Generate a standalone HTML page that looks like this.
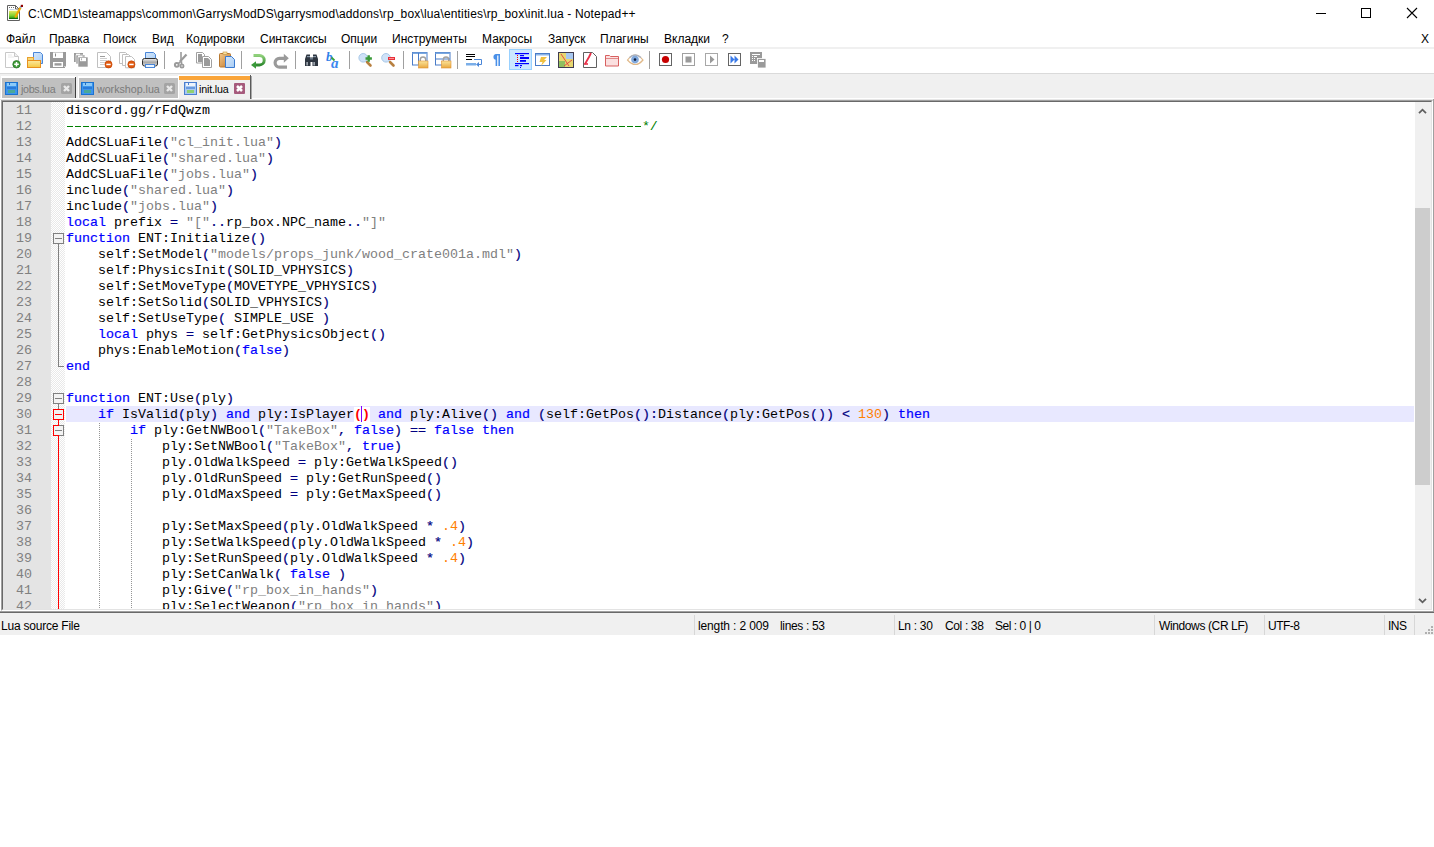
<!DOCTYPE html>
<html><head><meta charset="utf-8">
<style>
*{margin:0;padding:0;box-sizing:border-box}
html,body{width:1434px;height:847px;overflow:hidden;background:#fff}
body{position:relative;font-family:"Liberation Sans",sans-serif;font-size:12px;color:#000}
.a{position:absolute}
.t{position:absolute;white-space:pre;line-height:14px}
/* title */
#title{left:28px;top:7px;letter-spacing:0.16px}
/* menu */
.mi{position:absolute;top:32px;white-space:pre;line-height:14px}
/* toolbar */
.sep{position:absolute;top:52px;width:1px;height:17px;background:#a0a0a0}
.ico{position:absolute;top:52px;width:16px;height:16px}
/* tabs */
#tabbar{left:0;top:74px;width:1434px;height:26px;background:#f0f0f0}
.tab{position:absolute;top:78px;height:20px;background:#c0c0c0}
.tabtxt{position:absolute;top:82px;white-space:pre;line-height:14px;font-size:10.7px;color:#7a7a7a}
/* editor */
#ed{left:1px;top:100px;width:1432px;height:511px;border-top:1px solid #a0a0a0;border-left:1px solid #a0a0a0;border-right:1px solid #fff;border-bottom:1px solid #fff}
#edi{left:2px;top:101px;width:1430px;height:509px;border-top:1px solid #696969;border-left:1px solid #696969;border-right:1px solid #e3e3e3;border-bottom:1px solid #e3e3e3}
#clip{left:3px;top:102px;width:1428px;height:507px;overflow:hidden}
#clip .inner{position:absolute;left:-3px;top:-102px;width:1434px;height:847px}
#lnm{left:3px;top:102px;width:48px;height:508px;background:#e4e4e4}
#fold{left:51px;top:102px;width:14px;height:508px;background-color:#fff;background-image:linear-gradient(45deg,#e9e9e9 25%,transparent 25%,transparent 75%,#e9e9e9 75%),linear-gradient(45deg,#e9e9e9 25%,transparent 25%,transparent 75%,#e9e9e9 75%);background-size:2px 2px;background-position:1px 0,0 1px}
.ln{position:absolute;left:66px;height:16px;line-height:16px;padding-top:1px;white-space:pre;font-family:"Liberation Mono",monospace;font-size:13.333px;letter-spacing:0px;color:#000}
.ln.cur{background:#e8e8ff;width:1348px}
.num{position:absolute;left:3px;width:29px;text-align:right;height:16px;line-height:16px;padding-top:1px;font-family:"Liberation Mono",monospace;font-size:13.333px;letter-spacing:0px;color:#808080}
i{font-style:normal}
i.k{color:#0000ff;font-weight:normal;-webkit-text-stroke:0.2px #0000ff}
i.s{color:#808080}
i.o{color:#000080;font-weight:normal;-webkit-text-stroke:0.2px #000080}
i.n{color:#ff8000}
i.c{color:#008000}
i.bh{color:#ff0000;font-weight:bold;background:#fff}
/* scrollbar */
#sb{left:1415px;top:102px;width:16px;height:508px;background:#f0f0f0}
#thumb{left:1415px;top:208px;width:15px;height:277px;background:#cdcdcd}
/* status */
#st{left:0;top:611px;width:1434px;height:24px;background:#f0f0f0;border-top:1px solid #a0a0a0;box-shadow:inset 0 1px 0 #696969}
.sdiv{position:absolute;top:615px;width:1px;height:20px;background:#d7d7d7}
.stx{position:absolute;top:619px;white-space:pre;line-height:14px}
</style></head><body>

<!-- title bar -->
<svg class="a" style="left:6px;top:4px" width="18" height="18" viewBox="6 4 18 18">
 <defs><linearGradient id="gic" x1="0" y1="0" x2="0" y2="1"><stop offset="0" stop-color="#e8e860"/><stop offset="0.6" stop-color="#7cd030"/><stop offset="1" stop-color="#1a8a10"/></linearGradient></defs>
 <path d="M7.5 5.5h8l4 4v11h-12z" fill="#fff" stroke="#606060"/>
 <path d="M15.5 5.5v3.5h4" fill="none" stroke="#606060"/>
 <rect x="9" y="7" width="1" height="1" fill="#707070"/><rect x="11" y="7" width="1" height="1" fill="#707070"/><rect x="13" y="7" width="1" height="1" fill="#707070"/>
 <rect x="9.5" y="9" width="5" height="0.8" fill="#b8cce0"/>
 <rect x="9" y="10.8" width="9" height="8" fill="url(#gic)"/>
 <rect x="9" y="18" width="9" height="0.9" fill="#0a6a0a"/>
 <path d="M15.2 17.5l5.3-10" stroke="#f0a800" stroke-width="2.2"/>
 <path d="M20.3 7.8l0.9-1.7" stroke="#90a8c8" stroke-width="2"/>
 <rect x="20.8" y="4.8" width="2.2" height="2.2" fill="#900000"/>
</svg>
<div class="t" id="title">C:\CMD1\steamapps\common\GarrysModDS\garrysmod\addons\rp_box\lua\entities\rp_box\init.lua - Notepad++</div>
<div class="a" style="left:1316px;top:13px;width:10px;height:1px;background:#000"></div>
<div class="a" style="left:1361px;top:8px;width:10px;height:10px;border:1px solid #000"></div>
<svg class="a" style="left:1406px;top:7px" width="12" height="12" viewBox="0 0 12 12"><path d="M1 1L11 11M11 1L1 11" stroke="#000" stroke-width="1.1"/></svg>

<!-- menu -->
<div class="mi" style="left:6px">Файл</div>
<div class="mi" style="left:49px">Правка</div>
<div class="mi" style="left:103px">Поиск</div>
<div class="mi" style="left:152px">Вид</div>
<div class="mi" style="left:186px">Кодировки</div>
<div class="mi" style="left:260px">Синтаксисы</div>
<div class="mi" style="left:341px">Опции</div>
<div class="mi" style="left:392px">Инструменты</div>
<div class="mi" style="left:482px">Макросы</div>
<div class="mi" style="left:548px">Запуск</div>
<div class="mi" style="left:600px">Плагины</div>
<div class="mi" style="left:664px">Вкладки</div>
<div class="mi" style="left:722px">?</div>
<div class="mi" style="left:1421px;color:#000">X</div>
<div class="a" style="left:0;top:47px;width:1434px;height:2px;background:#f0f0f0"></div>

<!-- toolbar -->
<svg class="a" style="left:0;top:46px" width="780" height="28" viewBox="0 46 780 28">
<defs>
 <linearGradient id="gfold" x1="0" y1="0" x2="0" y2="1"><stop offset="0" stop-color="#fbe9a0"/><stop offset="1" stop-color="#f5c842"/></linearGradient>
 <linearGradient id="gblue" x1="0" y1="0" x2="1" y2="1"><stop offset="0" stop-color="#d6e8fc"/><stop offset="1" stop-color="#a8cdf5"/></linearGradient>
 <linearGradient id="gprint" x1="0" y1="0" x2="0" y2="1"><stop offset="0" stop-color="#f0f0f0"/><stop offset="0.5" stop-color="#a8a8a8"/><stop offset="1" stop-color="#e0e0e0"/></linearGradient>
 <linearGradient id="gclip" x1="0" y1="0" x2="1" y2="1"><stop offset="0" stop-color="#f4c88a"/><stop offset="1" stop-color="#c07a30"/></linearGradient>
 <linearGradient id="glock" x1="0" y1="0" x2="0" y2="1"><stop offset="0" stop-color="#fbe49a"/><stop offset="1" stop-color="#e8a840"/></linearGradient>
 <linearGradient id="ggreen" x1="0" y1="0" x2="0" y2="1"><stop offset="0" stop-color="#8fd07a"/><stop offset="1" stop-color="#2f8a2f"/></linearGradient>
</defs>
<!-- 1 New -->
<path d="M5.5 52.5h9l4 4v11h-13z" fill="#fff" stroke="#c8c8c8"/>
<path d="M14.5 52.5v4h4" fill="#f0f0f0" stroke="#c8c8c8"/>
<path d="M8 55h4M8 57h6" stroke="#e8e8e8"/>
<circle cx="16.5" cy="64.3" r="3.7" fill="#3d9a35" stroke="#2a7a2a" stroke-width="0.8"/>
<path d="M16.5 62v4.6M14.2 64.3h4.6" stroke="#fff" stroke-width="1.5"/>
<!-- 2 Open -->
<path d="M33.5 52.5h7l2 2v9h-9z" fill="url(#gblue)" stroke="#4a86d8"/>
<path d="M27.5 57.5h5l1 1h0v0" fill="none" stroke="#e8901e"/>
<rect x="27.5" y="57.5" width="6" height="3" fill="#f8d878" stroke="#e8a030"/>
<rect x="27.5" y="60.5" width="13" height="7" fill="url(#gfold)" stroke="#e8901e"/>
<!-- 3 Save -->
<path d="M50 52h16v15h-1v1h-15z" fill="#9a9a9a"/>
<rect x="53" y="52.5" width="10" height="5.5" fill="#fff"/>
<rect x="55" y="53.5" width="1" height="3" fill="#8a8a8a"/>
<rect x="53" y="62" width="10" height="5" fill="#fff"/>
<rect x="54.5" y="63.2" width="7" height="2.4" fill="#9a9a9a"/>
<rect x="64.5" y="66" width="1" height="1" fill="#fff"/>
<!-- 4 Save all -->
<rect x="74" y="53" width="9" height="9" fill="#9a9a9a"/>
<rect x="76" y="55" width="9" height="9" fill="#9a9a9a" stroke="#fff" stroke-width="0.6"/>
<rect x="78" y="57" width="10" height="10" fill="#9a9a9a" stroke="#fff" stroke-width="0.6"/>
<rect x="76" y="53.7" width="4" height="1.2" fill="#fff"/>
<rect x="78" y="55.7" width="4.5" height="1.2" fill="#fff"/>
<rect x="80" y="58" width="6" height="3.2" fill="#fff"/>
<rect x="81" y="58.3" width="0.8" height="2" fill="#9a9a9a"/>
<!-- 5 Close -->
<path d="M97.5 52.5h9l4 4v11h-13z" fill="#fff" stroke="#c0c0c0"/>
<path d="M100 56.5h5M100 58.5h7M100 60.5h7M100 62.5h5M100 64.5h4" stroke="#b8b8b8" stroke-width="0.7"/>
<path d="M100 56.5h5" stroke="#888" stroke-width="0.7"/>
<circle cx="108.5" cy="64.4" r="3.6" fill="#e05a10" stroke="#c04000" stroke-width="0.6"/>
<rect x="106.3" y="63.7" width="4.4" height="1.5" fill="#fff"/>
<!-- 6 Close all -->
<path d="M119.5 52.5h6l2 2v9h-8z" fill="#fff" stroke="#c0c0c0"/>
<path d="M122.5 54.5h6l2 2v9h-8z" fill="#fff" stroke="#c0c0c0"/>
<path d="M125.5 56.5h6l3 3v8.3h-9z" fill="#fff" stroke="#c0c0c0"/>
<circle cx="131.4" cy="64.4" r="3.6" fill="#e05a10" stroke="#c04000" stroke-width="0.6"/>
<rect x="129.2" y="63.7" width="4.4" height="1.5" fill="#fff"/>
<!-- 7 Print -->
<path d="M145.5 52.5h8l2 2v6h-10z" fill="url(#gblue)" stroke="#4a86d8"/>
<rect x="142.5" y="58.5" width="15" height="7.5" rx="2" fill="url(#gprint)" stroke="#303030"/>
<rect x="145.5" y="64.5" width="9" height="3" fill="#eaf4ff" stroke="#4a86d8"/>
<!-- sep -->
<rect x="164" y="51" width="1" height="18" fill="#a0a0a0"/>
<!-- 8 Cut -->
<path d="M181 52v9.5" stroke="#9a9a9a" stroke-width="1.6"/>
<path d="M186.5 54.5l-6.5 7" stroke="#9a9a9a" stroke-width="2.2"/>
<circle cx="176.8" cy="64.8" r="1.9" fill="none" stroke="#9a9a9a" stroke-width="2"/>
<circle cx="182" cy="66" r="1.6" fill="none" stroke="#9a9a9a" stroke-width="1.8"/>
<path d="M178.5 63.5l2-2M181.5 64.3v-3" stroke="#9a9a9a" stroke-width="1.6"/>
<!-- 9 Copy -->
<path d="M196.5 52.5h6l2 2v8.5h-8z" fill="#fff" stroke="#a0a0a0"/>
<rect x="198" y="54" width="4" height="8" fill="#9a9a9a"/>
<path d="M202.5 56.5h6l3 3v8h-9z" fill="#fff" stroke="#a0a0a0"/>
<path d="M204 58h4l2 2v6h-6z" fill="#9a9a9a"/>
<!-- 10 Paste -->
<rect x="219.5" y="53.5" width="11" height="13.5" rx="1" fill="url(#gclip)" stroke="#b87830"/>
<rect x="223" y="52" width="4" height="2.5" fill="#f8e0a0" stroke="#c09040" stroke-width="0.6"/>
<path d="M225.5 56.5h6l3 3v8h-9z" fill="url(#gblue)" stroke="#3a7ad0"/>
<!-- sep -->
<rect x="241" y="51" width="1" height="18" fill="#a0a0a0"/>
<!-- 11 Undo -->
<path d="M253.5 55.5h6a4.7 4.7 0 0 1 0 9.4h-4" fill="none" stroke="url(#ggreen)" stroke-width="3"/>
<path d="M251 65l5-3.8v7.6z" fill="#3a9a3a"/>
<!-- 12 Redo -->
<path d="M284 58.3h-4.5a4.4 4.4 0 0 0 0 8.8h7.5" fill="none" stroke="#9a9a9a" stroke-width="3.2"/>
<path d="M288.8 58.3l-5-4.5v9z" fill="#9a9a9a"/>
<!-- sep -->
<rect x="295" y="51" width="1" height="18" fill="#a0a0a0"/>
<!-- 13 Find -->
<path d="M305 59l1.5-4.5h3.5v3h3v-3h3.5l1.5 4.5v7h-5.5v-4h-2v4h-5.5z" fill="#2d3540"/>
<rect x="307" y="56" width="3" height="1.2" fill="#8898a8"/>
<rect x="313" y="56" width="3" height="1.2" fill="#8898a8"/>
<rect x="310" y="58" width="3" height="1.5" fill="#6a7a8a"/>
<rect x="306.5" y="62" width="1.2" height="3.5" fill="#c8d0d8"/>
<rect x="313.5" y="62" width="1.2" height="3.5" fill="#c8d0d8"/>
<!-- 14 Replace -->
<text x="326" y="60.5" font-family="Liberation Serif" font-style="italic" font-weight="bold" font-size="13" fill="#3080e8">b</text>
<text x="331" y="67.5" font-family="Liberation Serif" font-style="italic" font-weight="bold" font-size="15" fill="#3a88f0">a</text>
<path d="M331.5 57.5l3 3" stroke="#3aa03a" stroke-width="1.8"/>
<!-- sep -->
<rect x="349" y="51" width="1" height="18" fill="#a0a0a0"/>
<!-- 15 Zoom in -->
<path d="M367 62l3.5 3.5" stroke="#b88040" stroke-width="2.6" stroke-linecap="round"/>
<circle cx="363.2" cy="57.8" r="4.3" fill="#cfe2f8" stroke="#a8c8e8"/>
<path d="M368.7 55.3v6.4M365.5 58.5h6.4" stroke="#3a9a3a" stroke-width="2.4"/>
<!-- 16 Zoom out -->
<path d="M390 62l3.5 3.5" stroke="#b88040" stroke-width="2.6" stroke-linecap="round"/>
<circle cx="386" cy="57.8" r="4.3" fill="#cfe2f8" stroke="#a8c8e8"/>
<rect x="388" y="57" width="7" height="3" fill="#e8303a"/>
<rect x="389" y="58" width="5" height="1" fill="#ff9090"/>
<!-- sep -->
<rect x="403" y="51" width="1" height="18" fill="#a0a0a0"/>
<!-- 17 Sync V -->
<rect x="412.5" y="52.5" width="14.5" height="12.5" fill="#fff" stroke="#4a7cc8"/>
<rect x="412.5" y="52.5" width="14.5" height="1.5" fill="#7aa8e0"/>
<rect x="418" y="53" width="1" height="12" fill="#4a7cc8"/>
<path d="M420.3 61.5v-1.8a2.7 2.7 0 0 1 5.4 0v1.8" fill="none" stroke="#a0a0a0" stroke-width="1.4"/>
<rect x="418.5" y="61" width="9.5" height="7" fill="url(#glock)" stroke="#e09030" stroke-width="0.6"/>
<!-- 18 Sync H -->
<rect x="435.5" y="52.5" width="14.5" height="12.5" fill="#fff" stroke="#4a7cc8"/>
<rect x="435.5" y="52.5" width="14.5" height="1.5" fill="#7aa8e0"/>
<rect x="436" y="58.5" width="14" height="1" fill="#4a7cc8"/>
<path d="M443.3 61.5v-1.8a2.7 2.7 0 0 1 5.4 0v1.8" fill="none" stroke="#a0a0a0" stroke-width="1.4"/>
<rect x="441.5" y="61" width="9.5" height="7" fill="url(#glock)" stroke="#e09030" stroke-width="0.6"/>
<!-- sep -->
<rect x="457" y="51" width="1" height="18" fill="#a0a0a0"/>
<!-- 19 Word wrap -->
<rect x="466" y="54" width="9" height="1" fill="#000"/>
<rect x="466" y="56" width="9" height="1" fill="#000"/>
<rect x="466" y="59" width="6" height="1" fill="#000"/>
<path d="M474 59.5h7.5v5h-4" fill="none" stroke="#4a86d8" stroke-width="1"/>
<rect x="466" y="63" width="10" height="2.5" fill="#7aaee8"/>
<path d="M476 64.5l3-2.5v5z" fill="#4a86d8"/>
<!-- 20 pilcrow -->
<path d="M495 54h5v12h-1.6v-10.6h-1.2v10.6h-1.6v-6.2a3 3 0 0 1 0-5.8z" fill="#4a90e8"/>
<!-- 21 Indent guide (pressed) -->
<rect x="509.5" y="49.5" width="22" height="20" fill="#cce8ff" stroke="#99d1ff"/>
<rect x="515" y="53" width="14" height="1.2" fill="#0000ff"/>
<rect x="520" y="55" width="4" height="1.2" fill="#0000ff"/>
<rect x="520" y="57" width="9" height="2" fill="#0000ff"/>
<rect x="520" y="60" width="6" height="1.8" fill="#0000ff"/>
<rect x="515" y="63" width="14" height="1.2" fill="#0000ff"/>
<rect x="515" y="65" width="3.5" height="1.2" fill="#0000ff"/>
<rect x="520" y="65" width="2" height="1.2" fill="#0000ff"/>
<rect x="520" y="67" width="1" height="1" fill="#0000ff"/>
<rect x="517" y="55" width="1" height="1" fill="#ff0000"/>
<rect x="517" y="57" width="1" height="1" fill="#ff0000"/>
<rect x="517" y="59" width="1" height="1" fill="#ff0000"/>
<rect x="517" y="61" width="1" height="1" fill="#ff0000"/>
<!-- 22 Launch -->
<rect x="535.5" y="53.5" width="14" height="12" fill="#fff" stroke="#4a7cc8"/>
<rect x="536" y="54" width="13" height="1.5" fill="#8ab4e8"/>
<path d="M541 57h6l-3 3h2.5l-5.5 6 1.5-4h-3z" fill="#f0c040"/>
<!-- 23 Map -->
<rect x="558.5" y="52.5" width="15" height="15" fill="#e8d870" stroke="#403c50"/>
<rect x="566" y="53" width="7" height="6" fill="#a8c8f0"/>
<rect x="559" y="61" width="6" height="6" fill="#90c060"/>
<path d="M561 54l8 12M564 66l8-6" stroke="#e04040" stroke-width="0.9"/>
<!-- 24 Function list -->
<path d="M583.5 52.5h9l4 4v11h-13z" fill="#fff" stroke="#606060"/>
<path d="M585 64l4-7 2-4" stroke="#e83048" stroke-width="1.8"/>
<path d="M584 64h4" stroke="#e83048" stroke-width="1.6"/>
<!-- 25 Folder red -->
<path d="M605.5 55.5h4l1 1h8v9.5h-13z" fill="#fbe0e0" stroke="#d86060"/>
<path d="M606 58.5h12" stroke="#e08888"/>
<!-- 26 Eye -->
<path d="M627.5 60q7.5-10 15.5 0q-7.5 9-15.5 0z" fill="#fff" stroke="#e0b888" stroke-width="1.2"/>
<path d="M629.5 57.5q5.5-5 11.5 0" fill="none" stroke="#a8b0c0" stroke-width="1.3"/>
<circle cx="635" cy="59.6" r="3.8" fill="#80a8dc"/>
<circle cx="635" cy="59.6" r="1.3" fill="#102040"/>
<!-- sep -->
<rect x="649" y="51" width="1" height="18" fill="#a0a0a0"/>
<!-- 27 Record -->
<rect x="659.5" y="53.5" width="12" height="12" fill="#fff" stroke="#646464"/>
<circle cx="665.5" cy="59.5" r="3.6" fill="#c80000"/>
<!-- 28 Stop -->
<rect x="682.5" y="53.5" width="12" height="12" fill="#fff" stroke="#a0a0a0"/>
<rect x="685.5" y="56.5" width="6" height="6" fill="#9a9a9a"/>
<!-- 29 Play -->
<rect x="705.5" y="53.5" width="12" height="12" fill="#fff" stroke="#a8a8a8"/>
<path d="M710 55.5l4.5 4-4.5 4z" fill="#9a9a9a"/>
<!-- 30 Play multi -->
<rect x="728.5" y="53.5" width="12" height="12" fill="#fff" stroke="#646464"/>
<path d="M730.5 55.5l4 4-4 4zM734.5 55.5l4 4-4 4z" fill="#3a7ae8"/>
<!-- 31 Save macro -->
<rect x="750" y="52" width="12" height="12" fill="#9a9a9a"/>
<rect x="752" y="54" width="8" height="1" fill="#fff"/>
<rect x="752" y="56" width="1" height="1" fill="#fff"/><rect x="754" y="56" width="3" height="1" fill="#fff"/>
<rect x="752" y="58" width="1" height="1" fill="#fff"/><rect x="752" y="60" width="1" height="1" fill="#fff"/>
<rect x="754" y="58" width="1" height="1" fill="#fff"/><rect x="754" y="60" width="1" height="1" fill="#fff"/>
<rect x="757.5" y="58.5" width="8.5" height="9.5" fill="#9a9a9a" stroke="#fff" stroke-width="0.8"/>
<rect x="759" y="60" width="5" height="2" fill="#fff"/>
</svg>

<div class="a" style="left:0;top:73px;width:1434px;height:1px;background:#dadada"></div>

<!-- tabs -->
<div class="a" id="tabbar"></div>
<!-- white strip below tabs -->
<div class="a" style="left:0;top:98px;width:1434px;height:1px;background:#fff"></div><div class="a" style="left:0;top:99px;width:1434px;height:1px;background:#e6e6e6"></div>
<!-- jobs tab -->
<div class="a" style="left:1px;top:76px;width:75px;height:22px;background:#fff"></div>
<div class="a" style="left:2px;top:78px;width:73px;height:20px;background:#c0c0c0"></div>
<div class="a" style="left:75px;top:77px;width:1px;height:21px;background:#404040"></div>
<svg class="a" style="left:5px;top:82px" width="13" height="13" viewBox="0 0 13 13" shape-rendering="crispEdges">
 <rect x="0" y="0" width="13" height="13" fill="#1a72d0"/>
 <rect x="1" y="1" width="11" height="11" fill="#3d94ec"/>
 <rect x="2" y="1" width="9" height="3" fill="#8ccaf8"/>
 <rect x="4" y="1" width="1" height="2" fill="#2a70c0"/>
 <rect x="2" y="5" width="9" height="2" fill="#2a7ad8"/>
 <rect x="3" y="8" width="7" height="3" fill="#4aa898"/>
</svg>
<div class="tabtxt" style="left:21px;letter-spacing:-0.32px">jobs.lua</div>
<svg class="a" style="left:61px;top:83px" width="11" height="11" viewBox="0 0 11 11"><rect x="0" y="0" width="11" height="11" rx="1.5" fill="#a4a4a4"/><path d="M3 3L8 8M8 3L3 8" stroke="#e8e8e8" stroke-width="2.4"/></svg>
<!-- workshop tab -->
<div class="a" style="left:78px;top:76px;width:100px;height:22px;background:#fff"></div>
<div class="a" style="left:79px;top:78px;width:99px;height:20px;background:#c0c0c0"></div>
<svg class="a" style="left:81px;top:82px" width="13" height="13" viewBox="0 0 13 13" shape-rendering="crispEdges">
 <rect x="0" y="0" width="13" height="13" fill="#1a72d0"/>
 <rect x="1" y="1" width="11" height="11" fill="#3d94ec"/>
 <rect x="2" y="1" width="9" height="3" fill="#8ccaf8"/>
 <rect x="4" y="1" width="1" height="2" fill="#2a70c0"/>
 <rect x="2" y="5" width="9" height="2" fill="#2a7ad8"/>
 <rect x="3" y="8" width="7" height="3" fill="#4aa898"/>
</svg>
<div class="tabtxt" style="left:97px;letter-spacing:-0.02px">workshop.lua</div>
<svg class="a" style="left:164px;top:83px" width="11" height="11" viewBox="0 0 11 11"><rect x="0" y="0" width="11" height="11" rx="1.5" fill="#a4a4a4"/><path d="M3 3L8 8M8 3L3 8" stroke="#e8e8e8" stroke-width="2.4"/></svg>
<!-- active tab -->
<div class="a" style="left:178px;top:75px;width:74px;height:24px;background:#fff"></div>
<div class="a" style="left:179px;top:76px;width:71px;height:23px;background:#f0f0f0"></div>
<div class="a" style="left:179px;top:76px;width:71px;height:4px;background:#faa53a"></div>
<div class="a" style="left:250px;top:75px;width:1px;height:24px;background:#5a5a5a"></div><div class="a" style="left:251px;top:76px;width:1px;height:23px;background:#a8a8a8"></div>
<svg class="a" style="left:184px;top:82px" width="13" height="13" viewBox="0 0 13 13" shape-rendering="crispEdges">
 <rect x="0" y="0" width="13" height="13" fill="#4a7ed0"/>
 <rect x="1" y="1" width="11" height="11" fill="#a8c8f0"/>
 <rect x="2" y="1" width="9" height="3" fill="#eef4fc"/>
 <rect x="4" y="1" width="1" height="2" fill="#4a7ed0"/>
 <rect x="2" y="5" width="9" height="2" fill="#6a9ae0"/>
 <rect x="3" y="8" width="7" height="3" fill="#90d070"/>
</svg>
<div class="tabtxt" style="left:199px;color:#000;letter-spacing:-0.18px">init.lua</div>
<svg class="a" style="left:234px;top:83px" width="11" height="11" viewBox="0 0 11 11"><rect x="0" y="0" width="11" height="11" rx="1" fill="#a65a7c"/><path d="M3 3L8 8M8 3L3 8" stroke="#fff" stroke-width="2.5"/></svg>


<!-- editor -->
<div class="a" id="ed"></div>
<div class="a" id="edi"></div>
<div class="a" id="clip"><div class="inner">
<div class="a" id="lnm"></div>
<div class="a" id="fold"></div>
<svg class="a" style="left:51px;top:102px" width="14" height="508" viewBox="51 102 14 508" shape-rendering="crispEdges">
 <!-- line 19 box: top 230 -->
 <rect x="53.5" y="233.5" width="10" height="10" fill="#f3f3f3" stroke="#808080" stroke-width="1"/>
 <rect x="55" y="238" width="7" height="1" fill="#808080"/>
 <rect x="58" y="244" width="1" height="122" fill="#808080"/>
 <rect x="58" y="366" width="6" height="1" fill="#808080"/>
 <!-- line 29 box: top 390 -->
 <rect x="53.5" y="393.5" width="10" height="10" fill="#f3f3f3" stroke="#808080"/>
 <rect x="55" y="398" width="7" height="1" fill="#808080"/>
 <rect x="58" y="404" width="1" height="5" fill="#808080"/>
 <!-- line 30 box: top 406 red -->
 <rect x="53.5" y="409.5" width="10" height="10" fill="#f3f3f3" stroke="#ff0000"/>
 <rect x="55" y="414" width="7" height="1" fill="#ff0000"/>
 <rect x="58" y="420" width="1" height="5" fill="#ff0000"/>
 <!-- line 31 box: top 422 -->
 <rect x="53.5" y="425.5" width="10" height="10" fill="#f3f3f3" stroke="#808080"/>
 <rect x="53" y="425" width="6" height="1" fill="#ff0000"/>
 <rect x="53" y="425" width="1" height="11" fill="#ff0000"/>
 <rect x="53" y="435" width="6" height="1" fill="#ff0000"/>
 <rect x="55" y="430" width="7" height="1" fill="#808080"/>
 <rect x="58" y="436" width="1" height="180" fill="#ff0000"/>
</svg>
<div class="a" style="left:99px;top:423px;width:1px;height:190px;background:repeating-linear-gradient(to bottom,#959595 0,#959595 1px,transparent 1px,transparent 2px)"></div>
<div class="a" style="left:131px;top:439px;width:1px;height:174px;background:repeating-linear-gradient(to bottom,#959595 0,#959595 1px,transparent 1px,transparent 2px)"></div>

<div class="ln" style="top:102px">discord.gg/rFdQwzm</div>
<div class="num" style="top:102px">11</div>
<div class="ln" style="top:118px">                                                                        <i class="c">*/</i></div>
<div class="num" style="top:118px">12</div>
<div class="ln" style="top:134px">AddCSLuaFile<i class="o">(</i><i class="s">"cl_init.lua"</i><i class="o">)</i></div>
<div class="num" style="top:134px">13</div>
<div class="ln" style="top:150px">AddCSLuaFile<i class="o">(</i><i class="s">"shared.lua"</i><i class="o">)</i></div>
<div class="num" style="top:150px">14</div>
<div class="ln" style="top:166px">AddCSLuaFile<i class="o">(</i><i class="s">"jobs.lua"</i><i class="o">)</i></div>
<div class="num" style="top:166px">15</div>
<div class="ln" style="top:182px">include<i class="o">(</i><i class="s">"shared.lua"</i><i class="o">)</i></div>
<div class="num" style="top:182px">16</div>
<div class="ln" style="top:198px">include<i class="o">(</i><i class="s">"jobs.lua"</i><i class="o">)</i></div>
<div class="num" style="top:198px">17</div>
<div class="ln" style="top:214px"><i class="k">local</i> prefix <i class="o">=</i> <i class="s">"["</i><i class="o">.</i><i class="o">.</i>rp_box.NPC_name<i class="o">.</i><i class="o">.</i><i class="s">"]"</i></div>
<div class="num" style="top:214px">18</div>
<div class="ln" style="top:230px"><i class="k">function</i> ENT:Initialize<i class="o">(</i><i class="o">)</i></div>
<div class="num" style="top:230px">19</div>
<div class="ln" style="top:246px">    self:SetModel<i class="o">(</i><i class="s">"models/props_junk/wood_crate001a.mdl"</i><i class="o">)</i></div>
<div class="num" style="top:246px">20</div>
<div class="ln" style="top:262px">    self:PhysicsInit<i class="o">(</i>SOLID_VPHYSICS<i class="o">)</i></div>
<div class="num" style="top:262px">21</div>
<div class="ln" style="top:278px">    self:SetMoveType<i class="o">(</i>MOVETYPE_VPHYSICS<i class="o">)</i></div>
<div class="num" style="top:278px">22</div>
<div class="ln" style="top:294px">    self:SetSolid<i class="o">(</i>SOLID_VPHYSICS<i class="o">)</i></div>
<div class="num" style="top:294px">23</div>
<div class="ln" style="top:310px">    self:SetUseType<i class="o">(</i> SIMPLE_USE <i class="o">)</i></div>
<div class="num" style="top:310px">24</div>
<div class="ln" style="top:326px">    <i class="k">local</i> phys <i class="o">=</i> self:GetPhysicsObject<i class="o">(</i><i class="o">)</i></div>
<div class="num" style="top:326px">25</div>
<div class="ln" style="top:342px">    phys:EnableMotion<i class="o">(</i><i class="k">false</i><i class="o">)</i></div>
<div class="num" style="top:342px">26</div>
<div class="ln" style="top:358px"><i class="k">end</i></div>
<div class="num" style="top:358px">27</div>
<div class="ln" style="top:374px"></div>
<div class="num" style="top:374px">28</div>
<div class="ln" style="top:390px"><i class="k">function</i> ENT:Use<i class="o">(</i>ply<i class="o">)</i></div>
<div class="num" style="top:390px">29</div>
<div class="ln cur" style="top:406px">    <i class="k">if</i> IsValid<i class="o">(</i>ply<i class="o">)</i> <i class="k">and</i> ply:IsPlayer<i class="bh">()</i> <i class="k">and</i> ply:Alive<i class="o">(</i><i class="o">)</i> <i class="k">and</i> <i class="o">(</i>self:GetPos<i class="o">(</i><i class="o">)</i><i class="o">:</i>Distance<i class="o">(</i>ply:GetPos<i class="o">(</i><i class="o">)</i><i class="o">)</i> <i class="o">&lt;</i> <i class="n">130</i><i class="o">)</i> <i class="k">then</i></div>
<div class="num" style="top:406px">30</div>
<div class="ln" style="top:422px">        <i class="k">if</i> ply:GetNWBool<i class="o">(</i><i class="s">"TakeBox"</i><i class="o">,</i> <i class="k">false</i><i class="o">)</i> <i class="o">=</i><i class="o">=</i> <i class="k">false</i> <i class="k">then</i></div>
<div class="num" style="top:422px">31</div>
<div class="ln" style="top:438px">            ply:SetNWBool<i class="o">(</i><i class="s">"TakeBox"</i><i class="o">,</i> <i class="k">true</i><i class="o">)</i></div>
<div class="num" style="top:438px">32</div>
<div class="ln" style="top:454px">            ply.OldWalkSpeed <i class="o">=</i> ply:GetWalkSpeed<i class="o">(</i><i class="o">)</i></div>
<div class="num" style="top:454px">33</div>
<div class="ln" style="top:470px">            ply.OldRunSpeed <i class="o">=</i> ply:GetRunSpeed<i class="o">(</i><i class="o">)</i></div>
<div class="num" style="top:470px">34</div>
<div class="ln" style="top:486px">            ply.OldMaxSpeed <i class="o">=</i> ply:GetMaxSpeed<i class="o">(</i><i class="o">)</i></div>
<div class="num" style="top:486px">35</div>
<div class="ln" style="top:502px"></div>
<div class="num" style="top:502px">36</div>
<div class="ln" style="top:518px">            ply:SetMaxSpeed<i class="o">(</i>ply.OldWalkSpeed <i class="o">*</i> <i class="n">.4</i><i class="o">)</i></div>
<div class="num" style="top:518px">37</div>
<div class="ln" style="top:534px">            ply:SetWalkSpeed<i class="o">(</i>ply.OldWalkSpeed <i class="o">*</i> <i class="n">.4</i><i class="o">)</i></div>
<div class="num" style="top:534px">38</div>
<div class="ln" style="top:550px">            ply:SetRunSpeed<i class="o">(</i>ply.OldWalkSpeed <i class="o">*</i> <i class="n">.4</i><i class="o">)</i></div>
<div class="num" style="top:550px">39</div>
<div class="ln" style="top:566px">            ply:SetCanWalk<i class="o">(</i> <i class="k">false</i> <i class="o">)</i></div>
<div class="num" style="top:566px">40</div>
<div class="ln" style="top:582px">            ply:Give<i class="o">(</i><i class="s">"rp_box_in_hands"</i><i class="o">)</i></div>
<div class="num" style="top:582px">41</div>
<div class="ln" style="top:598px">            ply:SelectWeapon<i class="o">(</i><i class="s">"rp_box_in_hands"</i><i class="o">)</i></div>
<div class="num" style="top:598px">42</div>
<div class="a" style="left:66px;top:126px;width:576px;height:1px;background:repeating-linear-gradient(to right,transparent 0,transparent 1px,#008000 1px,#008000 7px,transparent 7px,transparent 8px)"></div>
<div class="a" style="left:361px;top:406px;width:1px;height:16px;background:#8000ff"></div>
<div class="a" id="sb"></div>
<div class="a" id="thumb"></div>
<svg class="a" style="left:1415px;top:102px" width="16" height="508" viewBox="1415 102 16 508">
 <path d="M1419 113.2l3.5-3.5 3.5 3.5" fill="none" stroke="#606060" stroke-width="1.8"/>
 <path d="M1419 598.8l3.5 3.5 3.5-3.5" fill="none" stroke="#606060" stroke-width="1.8"/>
</svg>

</div></div>

<!-- status -->
<div class="a" id="st"></div>
<div class="stx" style="left:1px;letter-spacing:-0.22px">Lua source File</div>
<div class="sdiv" style="left:694px"></div>
<div class="stx" style="left:698px;letter-spacing:-0.14px">length : 2 009</div>
<div class="stx" style="left:780px;letter-spacing:-0.34px">lines : 53</div>
<div class="sdiv" style="left:894px"></div>
<div class="stx" style="left:898px;letter-spacing:-0.3px">Ln : 30</div>
<div class="stx" style="left:945px;letter-spacing:-0.36px">Col : 38</div>
<div class="stx" style="left:995px;letter-spacing:-0.46px">Sel : 0 | 0</div>
<div class="sdiv" style="left:1154px"></div>
<div class="stx" style="left:1159px;letter-spacing:-0.38px">Windows (CR LF)</div>
<div class="sdiv" style="left:1264px"></div>
<div class="stx" style="left:1268px;letter-spacing:-0.54px">UTF-8</div>
<div class="sdiv" style="left:1384px"></div>
<div class="stx" style="left:1388px;letter-spacing:-0.56px">INS</div>
<div class="sdiv" style="left:1414px"></div>
<div class="a" style="left:1433px;top:99px;width:1px;height:512px;background:#a0a0a0"></div>
<svg class="a" style="left:1424px;top:625px" width="10" height="10" viewBox="1424 625 10 10" shape-rendering="crispEdges">
 <rect x="1431" y="626" width="2" height="2" fill="#b0b0b0"/>
 <rect x="1428" y="629" width="2" height="2" fill="#b0b0b0"/><rect x="1431" y="629" width="2" height="2" fill="#b0b0b0"/>
 <rect x="1425" y="632" width="2" height="2" fill="#b0b0b0"/><rect x="1428" y="632" width="2" height="2" fill="#b0b0b0"/><rect x="1431" y="632" width="2" height="2" fill="#b0b0b0"/>
</svg>
</body></html>
